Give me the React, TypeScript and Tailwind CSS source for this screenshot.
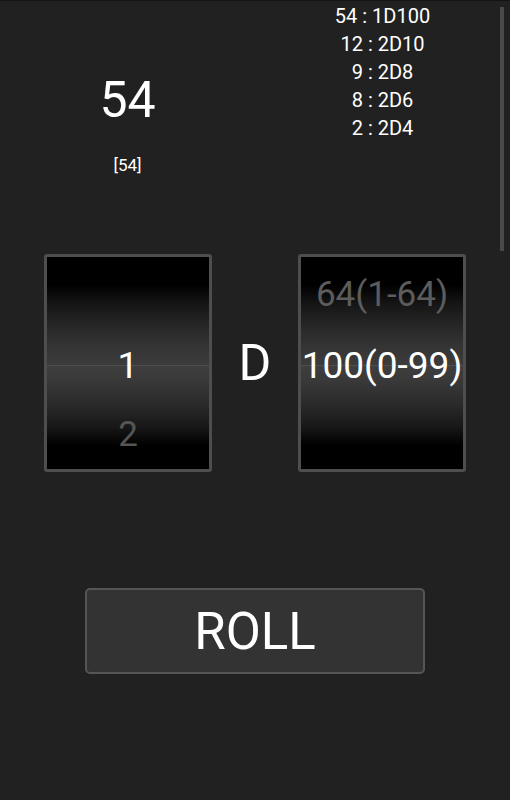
import React from "react";

const pickerBg =
  "bg-[linear-gradient(to_bottom,#000_0%,#000_13%,#151515_22%,#262626_32%,#343434_42%,#3c3c3c_51%,#4e4e4e_51%,#4e4e4e_51.6%,#3e3e3e_51.6%,#383838_59%,#2b2b2b_69%,#181818_80%,#000_89%,#000_100%)]";

function Picker({ top, mid, bottom }: { top: string; mid: string; bottom: string }) {
  return (
    <div className="w-[168px] h-[218px] rounded-[3px] border-[3px] border-[#4e4e4e] bg-black overflow-hidden">
      <div className={`w-full h-full flex flex-col justify-center ${pickerBg}`}>
        <div className="h-[69px] leading-[69px] text-center text-[35px] text-[#5c5c5c] whitespace-nowrap">{top}</div>
        <div className="h-[69px] leading-[69px] text-center text-[37px] text-white whitespace-nowrap pt-[2px]">{mid}</div>
        <div className="h-[69px] leading-[69px] text-center text-[35px] text-[#555555] whitespace-nowrap pt-[2px]">{bottom}</div>
      </div>
    </div>
  );
}

export default function App() {
  const history = ["54 : 1D100", "12 : 2D10", "9 : 2D8", "8 : 2D6", "2 : 2D4"];
  return (
    <div
      className="relative w-full h-[800px] bg-[#212121] border-t border-[#141414] overflow-hidden text-white"
      style={{ fontFamily: "Roboto, 'Open Sans', sans-serif" }}
    >
      <div className="grid grid-cols-2 h-[253px]">
        <div className="flex flex-col items-center">
          <div className="mt-[74px] text-[50px] leading-[50px]">54</div>
          <div className="mt-[30px] text-[17px] leading-[20px]">[54]</div>
        </div>
        <div className="flex flex-col items-center pt-[1px] text-[20px] leading-[28px]">
          {history.map((h) => (
            <div key={h}>{h}</div>
          ))}
        </div>
      </div>

      <div className="flex items-center justify-between px-[44px]">
        <Picker top="" mid="1" bottom="2" />
        <div className="text-[50px] leading-[50px]">D</div>
        <Picker top="64(1-64)" mid="100(0-99)" bottom="" />
      </div>

      <div className="mt-[116px] ml-[85px] w-[340px] h-[86px] rounded-[5px] border-2 border-[#555555] bg-[#333333] flex items-center justify-center">
        <span className="text-[51px] leading-[51px]">ROLL</span>
      </div>

      <div className="absolute right-[6px] top-[6px] w-[4px] h-[244px] bg-[#4a4a4a]" />
    </div>
  );
}
